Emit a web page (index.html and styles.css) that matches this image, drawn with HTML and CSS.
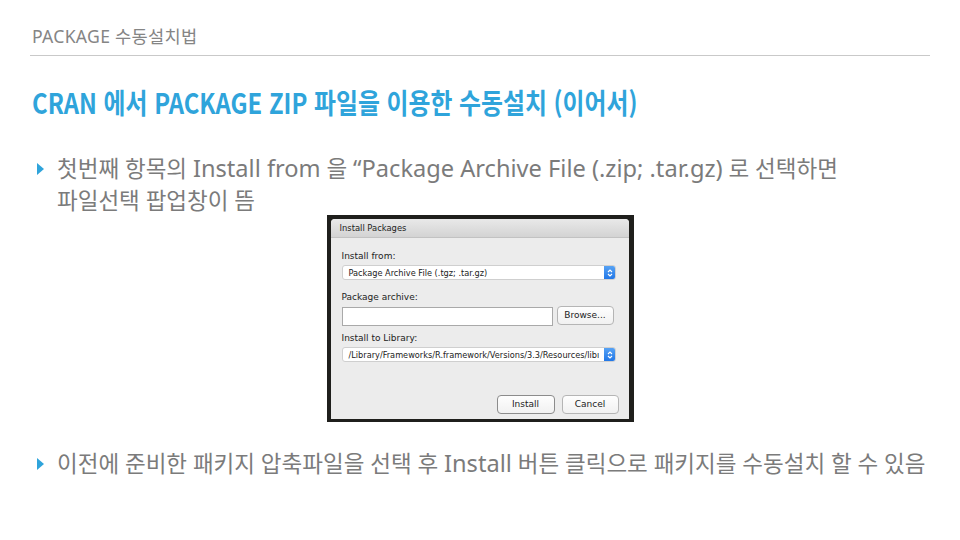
FILE: index.html
```html
<!DOCTYPE html>
<html lang="ko">
<head>
<meta charset="utf-8">
<link rel="stylesheet" href="styles.css">
</head>
<body>
<div class="slide">
  <header class="top">
    <div class="section">PACKAGE 수동설치법</div>
  </header>
  <h1 class="title"><span class="title-text">CRAN 에서 PACKAGE ZIP 파일을 이용한 수동설치 (이어서)</span></h1>
  <ul class="bullets">
    <li class="item first">첫번째 항목의 <span class="en">Install from</span> 을 <span class="en">“Package Archive File (.zip; .tar.gz)</span> 로 선택하면<br>파일선택 팝업창이 뜸</li>
  </ul>
  <div class="shot">
    <div class="frame">
      <div class="dialog">
        <div class="titlebar">Install Packages</div>
        <div class="body">
          <div class="label">Install from:</div>
          <div class="select"><span class="val">Package Archive File (.tgz; .tar.gz)</span><span class="stepper"><svg width="8" height="10" viewBox="0 0 8 10"><path d="M2 4 L4 2 L6 4 M2 6 L4 8 L6 6" fill="none" stroke="#fff" stroke-width="1.1"/></svg></span></div>
          <div class="label gap">Package archive:</div>
          <div class="filerow"><div class="input"></div><div class="btn browse">Browse...</div></div>
          <div class="label gap2">Install to Library:</div>
          <div class="select"><span class="val">/Library/Frameworks/R.framework/Versions/3.3/Resources/libı</span><span class="stepper"><svg width="8" height="10" viewBox="0 0 8 10"><path d="M2 4 L4 2 L6 4 M2 6 L4 8 L6 6" fill="none" stroke="#fff" stroke-width="1.1"/></svg></span></div>
          <div class="actions"><div class="btn install">Install</div><div class="btn cancel">Cancel</div></div>
        </div>
      </div>
    </div>
  </div>
  <ul class="bullets second">
    <li class="item">이전에 준비한 패키지 압축파일을 선택 후 <span class="en">Install</span> 버튼 클릭으로 패키지를 수동설치 할 수 있음</li>
  </ul>
</div>
</body>
</html>
```

FILE: styles.css
```css
* { box-sizing: border-box; }
html, body { margin: 0; padding: 0; background: #fff; }
.slide {
  width: 960px;
  height: 540px;
  overflow: hidden;
  font-family: "Noto Sans", "Noto Sans CJK KR", sans-serif;
}
.top {
  margin: 0 30px;
  padding: 25px 0 0 2px;
  height: 56px;
  border-bottom: 1px solid #c9c9c9;
}
.section {
  font-family: "Noto Sans", "Noto Sans CJK KR", sans-serif;
  font-size: 17.6px;
  line-height: 22px;
  color: #858585;
  letter-spacing: 0.3px;
}
.title {
  margin: 28px 0 0 32px;
  height: 36px;
  font-family: "Noto Sans CJK KR", sans-serif;
  font-weight: 700;
  font-size: 28px;
  line-height: 36px;
  color: #2fa4db;
  white-space: nowrap;
}
.title-text {
  display: inline-block;
  transform: scaleX(0.852);
  transform-origin: left center;
}
.bullets {
  list-style: none;
  margin: 33px 0 0 0;
  padding: 0 0 0 57px;
}
.item {
  position: relative;
  font-size: 22.5px;
  line-height: 32px;
  color: #7b7b7b;
  white-space: nowrap;
}
.item .en { font-size: 1.05em; line-height: 1; }
.item::before {
  content: "";
  position: absolute;
  left: -20px;
  top: 10px;
  border-left: 7px solid #2fa4db;
  border-top: 6px solid transparent;
  border-bottom: 6px solid transparent;
}
.shot {
  display: flex;
  justify-content: center;
  margin-top: -2px;
}
.frame {
  width: 307px;
  height: 207px;
  background: #1f1f1c;
  padding: 4px 5px 3px 4px;
}
.dialog {
  height: 100%;
  background: #ececec;
  border-radius: 4px 4px 0 0;
  font-family: "DejaVu Sans", sans-serif;
  font-size: 9px;
  color: #222;
}
.titlebar {
  height: 19px;
  line-height: 19px;
  padding-left: 9px;
  border-radius: 4px 4px 0 0;
  background: linear-gradient(#e9e9e9, #d3d3d3);
  border-bottom: 1px solid #c2c2c2;
  font-size: 8.4px;
  color: #222;
}
.body { padding: 12px 13px 0 11px; }
.label { height: 12px; line-height: 12px; font-size: 9px; }
.label.gap { margin-top: 11px; }
.label.gap2 { margin-top: 6px; }
.select {
  display: flex;
  align-items: center;
  margin-top: 3px;
  height: 15px;
  background: #fff;
  border: 1px solid #cfcfcf;
  border-radius: 3px;
  font-size: 8.2px;
  overflow: hidden;
}
.select .val { flex: 1; padding-left: 6px; white-space: nowrap; overflow: hidden; }
.stepper {
  width: 12px;
  height: 15px;
  margin: -1px -1px -1px 0;
  background: linear-gradient(#5aa5f5, #1e74e6);
  border-radius: 0 3px 3px 0;
  display: flex;
  align-items: center;
  justify-content: center;
}
.filerow { display: flex; gap: 4px; margin-top: 3px; }
.input {
  width: 211px;
  height: 19px;
  background: #fff;
  border: 1px solid #a9a9a9;
  margin-top: 1px;
}
.btn {
  height: 19px;
  line-height: 17px;
  border: 1px solid #b5b5b5;
  border-radius: 4px;
  background: linear-gradient(#fefefe, #f1f1f1);
  text-align: center;
  font-size: 9px;
  color: #222;
}
.browse { width: 57px; }
.actions { display: flex; justify-content: flex-end; gap: 7px; margin-top: 33px; margin-right: -3px; }
.install { width: 58px; border-color: #8c8c8c; }
.cancel { width: 57px; }
.bullets.second { margin-top: 26px; }
```
